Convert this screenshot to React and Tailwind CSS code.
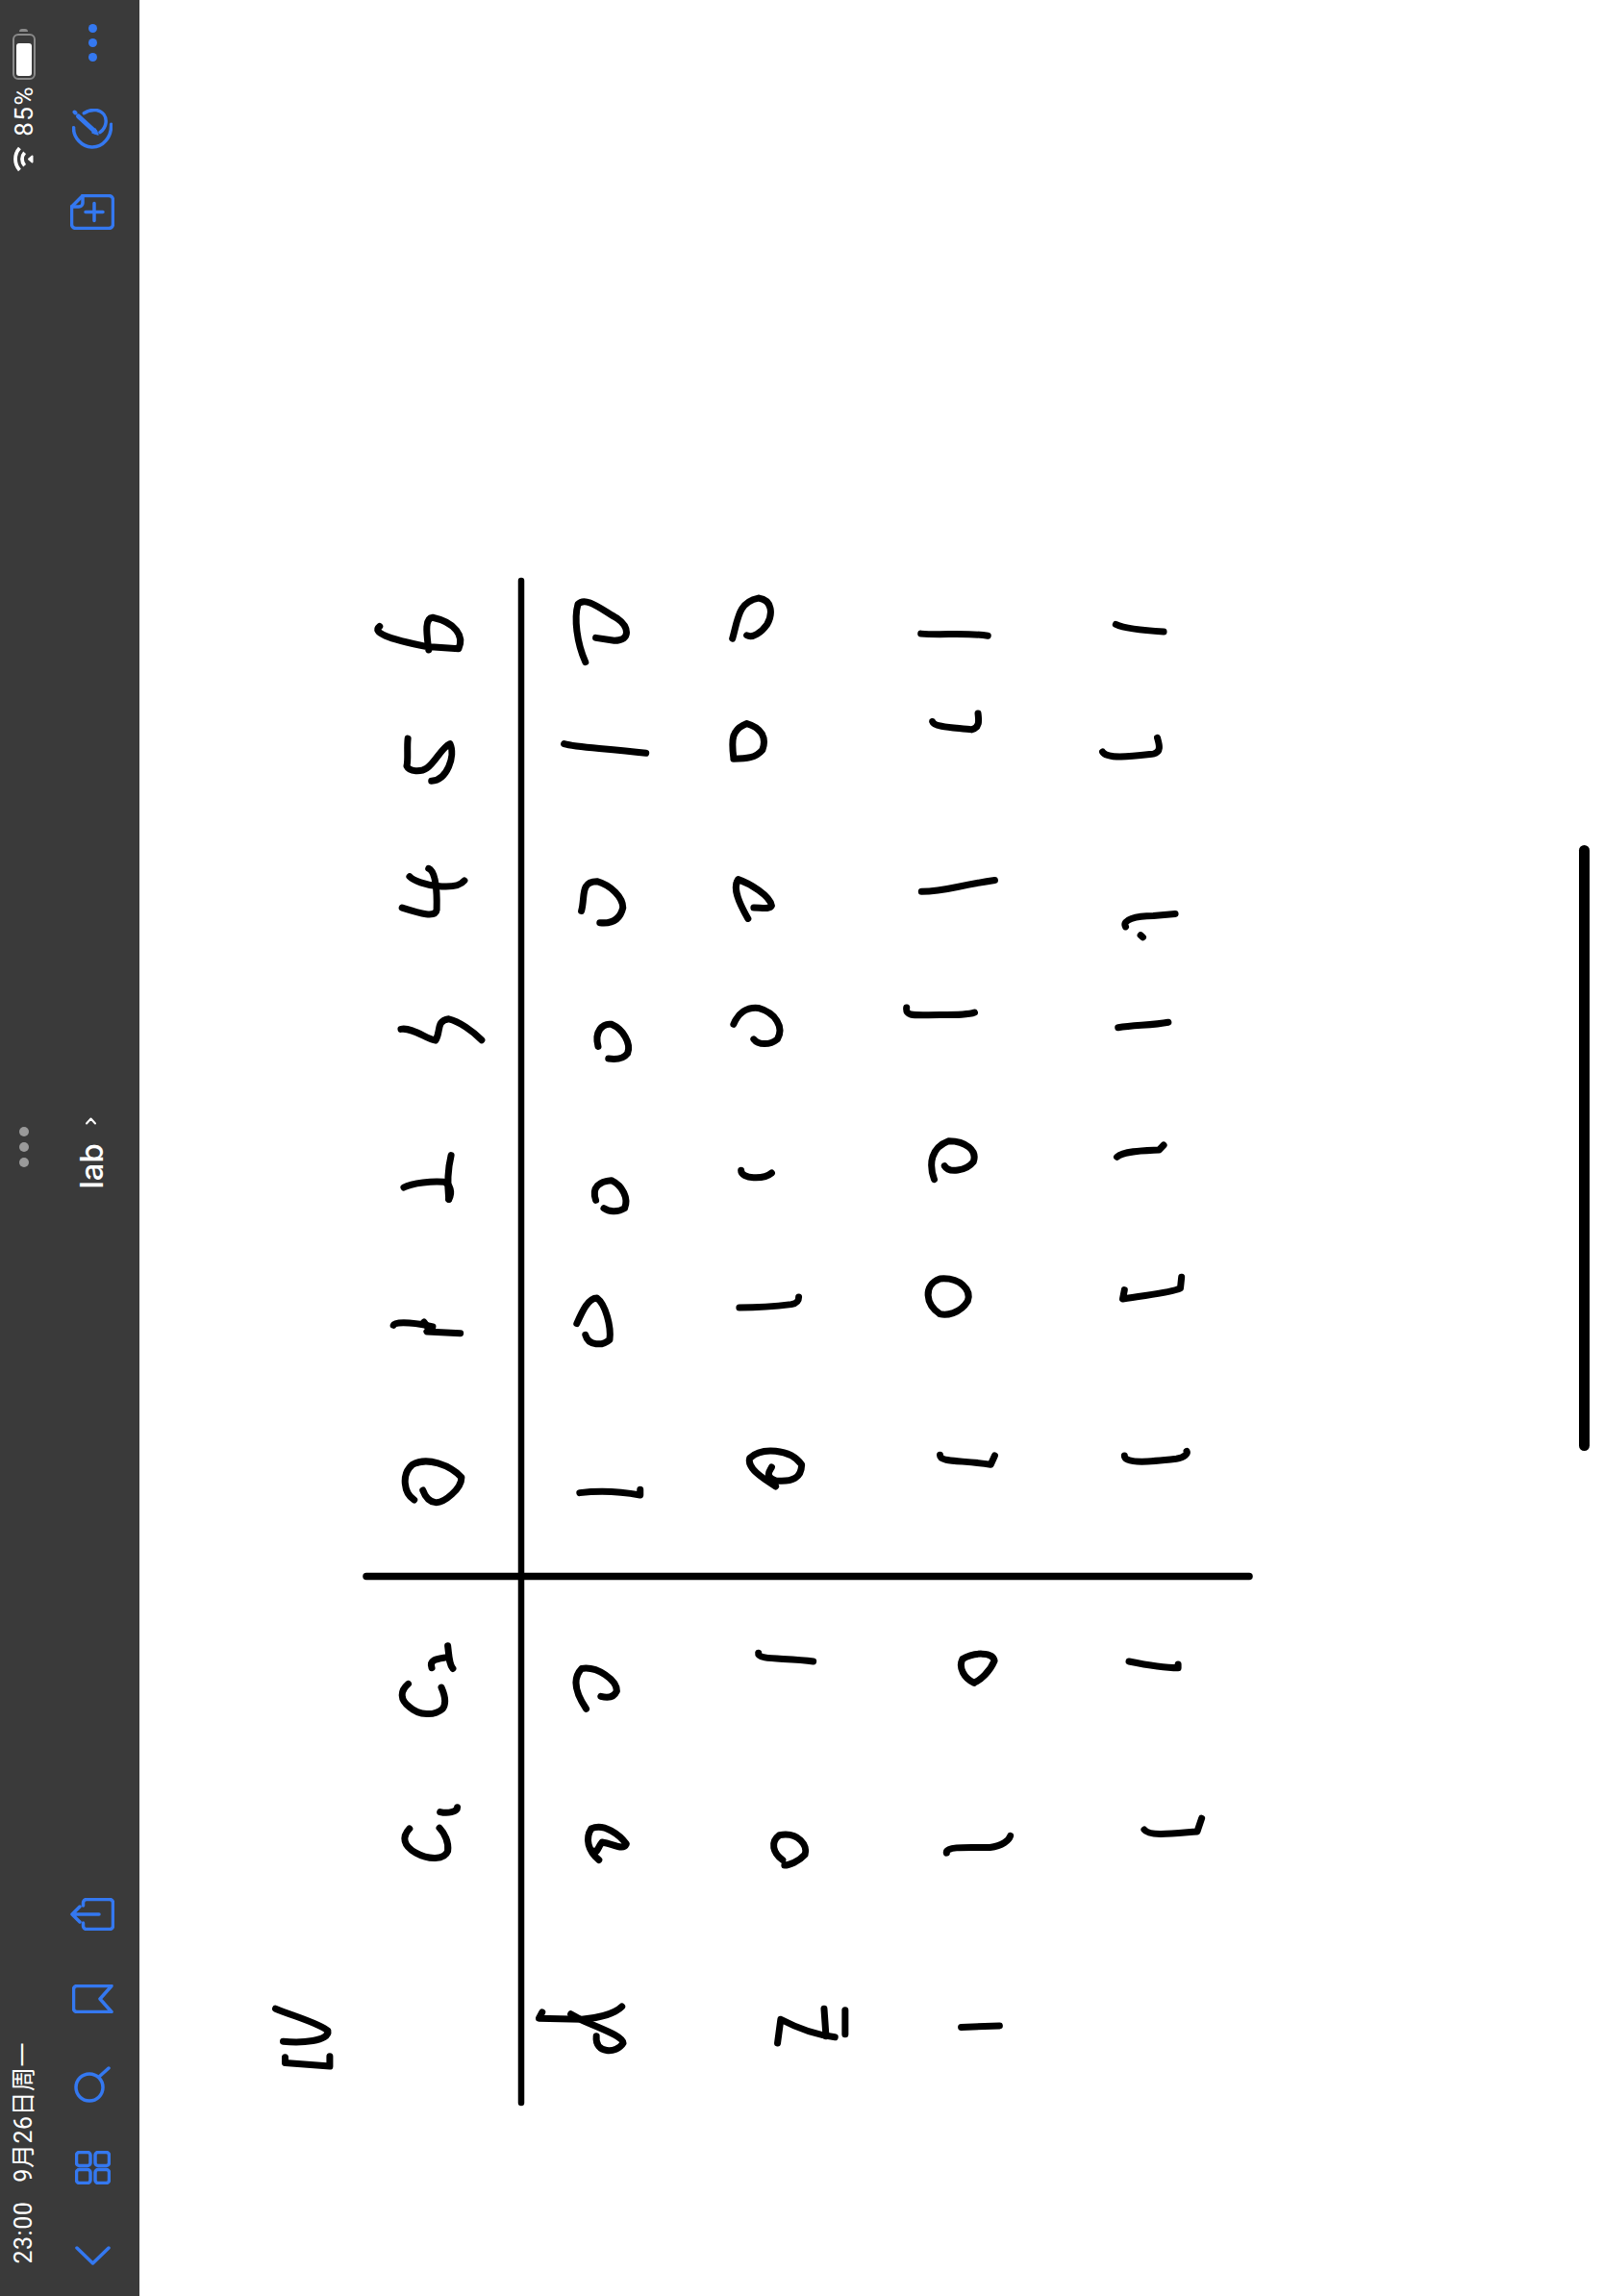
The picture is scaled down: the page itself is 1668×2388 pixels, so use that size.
// App.jsx: rotated notes screen, toolbar down the left and the handwritten table on the canvas
const BLUE = '#3478f0';

// handwriting strokes, each set traced in its own local box
const inkTop = [
  'M58 170 C45 185 70 200 140 220 L195 225 C205 195 190 160 150 148 C135 150 140 190 143 228',
  'M107 447 C105 470 108 500 105 515 C110 530 130 530 140 520 C155 505 165 470 180 460 C190 490 175 550 148 552',
  'M143 768 C155 775 158 820 157 870 C155 890 130 880 97 865',
  'M110 788 C125 810 190 825 205 798',
  'M95 1165 C115 1160 140 1190 155 1193 C165 1170 155 1145 178 1140 C195 1145 220 1170 235 1192',
  'M415 258 C400 210 395 150 402 115 C415 95 440 125 470 150 C490 170 495 205 465 205 L433 198',
  'M378 460 C400 470 450 470 520 483',
  'M408 873 C415 840 405 800 435 800 C460 810 480 840 480 865 C475 895 460 905 440 902',
  'M437 1208 C430 1170 445 1150 460 1153 C480 1165 495 1200 488 1225 C480 1240 465 1240 455 1238',
  'M670 200 C680 150 680 110 715 100 C740 105 740 140 730 165 C720 185 705 200 695 192',
  'M672 495 C668 450 668 425 695 410 C720 420 730 445 722 475 C710 495 695 497 672 497',
  'M697 892 C680 850 670 815 680 795 C700 805 735 835 738 860 C735 870 720 865 707 865',
  'M672 1153 C680 1125 695 1110 715 1113 C745 1125 760 1160 748 1190 C735 1205 715 1205 707 1190',
  'M997 188 C1030 192 1080 185 1113 193',
  'M1017 405 C1020 420 1060 420 1085 425 C1100 420 1097 400 1096 385',
  'M998 825 C1040 825 1060 810 1125 797',
  'M972 1112 C970 1135 985 1130 1030 1130 C1060 1130 1080 1130 1090 1124',
  'M1335 165 C1350 175 1380 180 1418 183',
  'M1312 480 C1320 500 1370 490 1400 485 C1415 480 1410 460 1407 445',
  'M1352 912 C1345 895 1370 885 1400 885 L1438 880',
  'M1378 933 L1382 938',
  'M1339 1161 C1370 1155 1400 1155 1426 1148',
];

const inkMid = [
  'M182 125 C176 170 175 210 178 262',
  'M100 225 C115 210 150 205 170 208 C180 215 185 240 178 262',
  'M82 655 C85 640 130 650 150 660 L140 675 L198 680',
  'M135 645 L145 670',
  'M118 1200 C100 1180 95 1120 115 1090 C140 1065 180 1090 200 1130 C200 1165 170 1210 155 1208 C140 1205 135 1180 133 1170',
  'M433 265 C425 225 440 205 460 203 C480 220 490 260 483 290 C470 305 455 300 447 290',
  'M400 650 C410 610 420 570 435 570 C450 590 460 660 457 700 C445 720 420 720 415 685',
  'M405 1178 C440 1170 480 1175 510 1185 L510 1168',
  'M685 172 C685 200 725 200 738 180',
  'M682 600 C710 600 750 595 772 590 C785 585 785 575 785 567',
  'M745 1158 C720 1130 695 1100 700 1070 C720 1035 770 1040 790 1090 C790 1130 775 1145 745 1140 C725 1125 735 1110 738 1098',
  'M1020 200 C1010 150 1015 100 1045 80 C1075 80 1095 110 1088 145 C1075 175 1045 180 1038 158',
  'M1030 620 C1005 590 1000 530 1030 510 C1065 505 1085 545 1078 580 C1065 620 1040 625 1030 620',
  'M1030 1060 C1030 1085 1070 1075 1118 1090 L1125 1062',
  'M1337 130 C1350 110 1390 110 1410 108 L1418 93',
  'M1350 545 L1347 573 C1390 560 1430 555 1447 540 L1449 505',
  'M1350 1062 C1350 1090 1400 1080 1440 1072 C1455 1068 1460 1055 1458 1048',
];

const inkBottom = [
  'M310 248 C312 275 312 300 318 312',
  'M285 310 C280 285 295 285 310 280',
  'M248 355 C235 375 235 400 250 420 C265 445 290 445 302 425 C308 410 305 385 300 365',
  'M298 715 C310 720 325 715 325 702',
  'M250 762 C238 785 240 810 260 830 C280 850 305 850 310 825 C312 800 305 775 297 760',
  'M527 425 C510 380 505 340 520 312 C545 305 575 345 575 375 C570 395 560 395 550 390',
  'M547 850 C530 825 525 790 535 762 C555 745 580 780 590 805 C585 825 570 805 552 800 C545 815 545 830 540 825',
  'M583 1262 C570 1285 540 1295 520 1298 L453 1295 L458 1278',
  'M503 1283 L520 1300 C550 1325 585 1345 585 1365 C575 1395 540 1395 543 1345',
  'M797 268 C795 290 840 280 883 292',
  'M1135 352 C1120 340 1110 310 1117 285 C1135 265 1165 265 1167 290 C1160 320 1145 345 1135 352',
  'M835 850 C820 830 815 800 830 780 C860 770 875 810 870 835 C860 855 845 865 838 865',
  'M827 1365 L832 1298 C850 1315 880 1340 917 1348',
  'M900 1268 L903 1345',
  'M933 1272 L933 1340',
  'M1378 292 C1400 300 1430 310 1455 310 L1455 300',
  'M1092 830 C1090 810 1130 815 1160 815 C1180 810 1190 795 1192 782',
  'M1115 1320 L1175 1316',
  'M1402 765 C1410 785 1450 775 1485 770 L1492 733',
  'M40 1268 C70 1290 110 1310 122 1330 C125 1360 80 1365 52 1360',
  'M55 1405 L55 1420 L125 1430 L125 1402',
];

function Ink({ paths, transform }) {
  return (
    <g transform={transform}>
      {paths.map((d) => (
        <path key={d} d={d} vectorEffect="non-scaling-stroke" />
      ))}
    </g>
  );
}

function Canvas() {
  return (
    <div className="relative flex-1 h-full bg-white flex items-center justify-end pr-[15px]">
      <svg
        className="absolute inset-0 w-full h-full"
        viewBox="145 0 1523 2388"
        fill="none"
        stroke="#000"
        strokeWidth="7"
        strokeLinecap="round"
        strokeLinejoin="round"
      >
        <Ink paths={inkTop} transform="translate(360 580) scale(0.5995 0.4209)" />
        <Ink paths={inkMid} transform="translate(360 1160) scale(0.5995 0.3333)" />
        <Ink paths={inkBottom} transform="translate(260 1620) scale(0.6633 0.37)" />
        <path d="M542 604 V2187" strokeWidth="6.5" />
        <path d="M381 1639.5 H1299" strokeWidth="7.5" />
      </svg>
      {/* scroll handle */}
      <div className="relative w-[11px] h-[630px] rounded-full bg-black" />
    </div>
  );
}

function Icon({ w, h, children, className }) {
  return (
    <svg
      width={w}
      height={h}
      viewBox={`0 0 ${w} ${h}`}
      fill="none"
      stroke={BLUE}
      strokeWidth="3.5"
      strokeLinecap="round"
      strokeLinejoin="round"
      className={className}
    >
      {children}
    </svg>
  );
}

function Battery() {
  return (
    <div className="flex flex-col items-center">
      <div className="w-[9px] h-[3px] rounded-t-full bg-[#8a8a8a] mb-[2px]" />
      <div className="w-[24px] h-[48px] rounded-[6px] border-2 border-[#8a8a8a] p-[2px] flex flex-col justify-end">
        <div className="h-[34px] rounded-[3px] bg-white" />
      </div>
    </div>
  );
}

function Wifi() {
  return (
    <svg width="21" height="27" viewBox="0 0 21 27" fill="none" stroke="#fff" strokeWidth="3.8">
      <path d="M6.4 2.1 A17 17 0 0 0 6.4 24.9" />
      <path d="M11.6 6.8 A10 10 0 0 0 11.6 20.2" />
      <path d="M16 13.5 L19.5 10.5 V16.5 Z" fill="#fff" strokeWidth="2" strokeLinejoin="round" />
    </svg>
  );
}

function Sidebar() {
  return (
    <div className="w-[145px] h-full flex shrink-0 bg-[#3a3a3a]">
      {/* status column */}
      <div className="w-[49px] h-full flex flex-col items-center font-['Roboto',_'Noto_Sans_CJK_SC',_sans-serif] text-white">
        <div className="flex-1 flex flex-col items-center pt-[30px]">
          <Battery />
          <span className="mt-[6px] text-[26px] leading-[28px] tracking-[1.5px] [writing-mode:vertical-rl] [text-orientation:sideways] rotate-180">
            85%
          </span>
          <div className="mt-[10px]">
            <Wifi />
          </div>
        </div>
        <div className="flex flex-col gap-[6px] items-center">
          <div className="w-[10px] h-[10px] rounded-full bg-[#9a9a9a]" />
          <div className="w-[10px] h-[10px] rounded-full bg-[#9a9a9a]" />
          <div className="w-[10px] h-[10px] rounded-full bg-[#9a9a9a]" />
        </div>
        <div className="flex-1 flex flex-col justify-end items-center pb-[33px]">
          <span className="text-[25px] leading-[28px] tracking-[0.5px] whitespace-pre [writing-mode:vertical-rl] [text-orientation:sideways] rotate-180">
            23:00   9月26日周一
          </span>
        </div>
      </div>

      {/* tool column */}
      <div className="w-[94px] h-full flex flex-col items-center">
        <div className="flex-1 flex flex-col items-center pt-[25px]">
          <div className="flex flex-col gap-[6px]">
            <div className="w-[9px] h-[9px] rounded-full bg-[#3478f0]" />
            <div className="w-[9px] h-[9px] rounded-full bg-[#3478f0]" />
            <div className="w-[9px] h-[9px] rounded-full bg-[#3478f0]" />
          </div>
          <Icon w={42} h={42} className="mt-[49px]">
            <path d="M12.3 4.7 A19 19 0 0 1 25.4 1.6 C32 3 36 8 35 15 C34.5 19 32 22.5 29 24.7" />
            <path d="M1.6 19.7 C1 30 10 39.5 20.3 40 C32 40.5 41 30 40.6 16.3" />
            <path d="M6.5 8 L24 24" strokeWidth="5" />
            <path d="M24 21 L27 27 L21 25 Z" fill={BLUE} strokeWidth="1.5" />
            <path d="M2.5 3.5 L3.5 4.5" strokeWidth="4" />
          </Icon>
          <Icon w={46} h={37} className="mt-[47px]">
            <path d="M13 1.5 H40 a4.5 4.5 0 0 1 4.5 4.5 V31 a4.5 4.5 0 0 1 -4.5 4.5 H6 a4.5 4.5 0 0 1 -4.5 -4.5 V13 Z" />
            <path d="M13 1.5 V9 a4 4 0 0 1 -4 4 H1.5" />
            <path d="M16 18.5 H34 M25 9.5 V27.5" />
          </Icon>
        </div>

        <div className="flex items-center gap-[17px] pb-[15px] [writing-mode:vertical-rl] [text-orientation:sideways] rotate-180 text-white font-['Inter',_sans-serif] font-medium text-[33px] leading-[34px] mr-[2px]">
          <span>lab</span>
          <svg width="9" height="13" viewBox="0 0 9 13" fill="none" stroke="#fff" strokeWidth="2" strokeLinecap="round" strokeLinejoin="round" className="rotate-90">
            <path d="M2 2 L7 6.5 L2 11" />
          </svg>
        </div>

        <div className="flex-1 flex flex-col justify-end items-center pb-[32px]">
          <Icon w={46} h={34}>
            <path d="M13.5 8 V5 a3.5 3.5 0 0 1 3.5 -3.5 H41 a3.5 3.5 0 0 1 3.5 3.5 V29 a3.5 3.5 0 0 1 -3.5 3.5 H17 a3.5 3.5 0 0 1 -3.5 -3.5 V26" />
            <path d="M30 17 H2 M10 9 L2 17 L10 25" />
          </Icon>
          <Icon w={43} h={30} className="mt-[56px]">
            <path d="M5 1.5 H41 L29 15 L41 28.5 H5 a3.5 3.5 0 0 1 -3.5 -3.5 V5 a3.5 3.5 0 0 1 3.5 -3.5 Z" />
          </Icon>
          <Icon w={38} h={38} className="mt-[55px]">
            <circle cx="16" cy="22" r="14" />
            <path d="M26 11 L36 2" />
          </Icon>
          <Icon w={37} h={35} className="mt-[50px]">
            <rect x="1.5" y="1.5" width="14.5" height="14" rx="3" />
            <rect x="21" y="1.5" width="14.5" height="14" rx="3" />
            <rect x="1.5" y="19.5" width="14.5" height="14" rx="3" />
            <rect x="21" y="19.5" width="14.5" height="14" rx="3" />
          </Icon>
          <Icon w={37} h={20} className="mt-[64px]">
            <path d="M2 2 L18.5 18 L35 2" />
          </Icon>
        </div>
      </div>
    </div>
  );
}

export default function App() {
  return (
    <div className="w-[1668px] h-[2388px] flex overflow-hidden">
      <Sidebar />
      <Canvas />
    </div>
  );
}
